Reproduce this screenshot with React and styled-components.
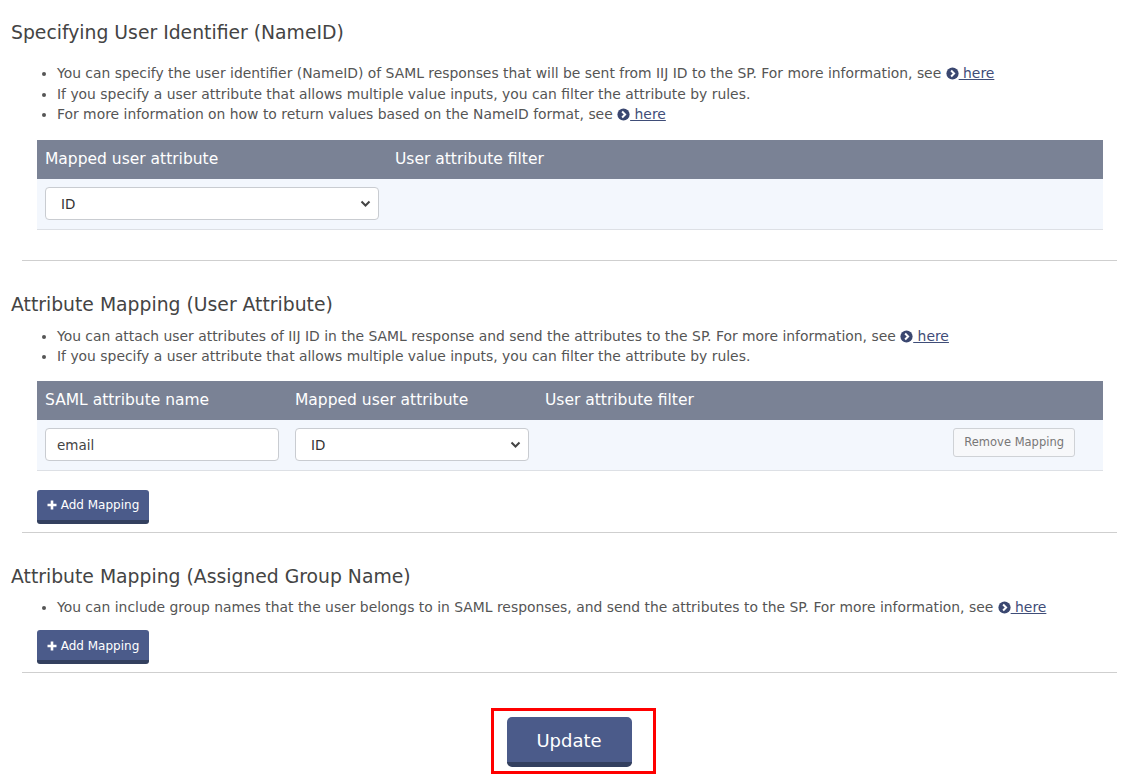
import React from "react";
import styled, { createGlobalStyle } from "styled-components";

const Global = createGlobalStyle`
  html, body { margin: 0; padding: 0; background: #fff; }
  body { font-family: "DejaVu Sans", Verdana, sans-serif; color: #555; }
  * { box-sizing: border-box; }
`;

const Page = styled.div`
  width: 1145px;
  padding: 19px 28px 0 11px;
`;

const Section = styled.section`
  padding-top: ${(p) => p.$pt || 0}px;
  padding-bottom: ${(p) => p.$pb || 0}px;
`;

const Title = styled.h2`
  margin: 0 0 ${(p) => p.$mb}px;
  font-size: 18.8px;
  font-weight: normal;
  color: #444;
  line-height: 28px;
`;

const List = styled.ul`
  margin: 0 0 ${(p) => p.$mb}px;
  padding-left: 46px;
  font-size: 13.9px;
  line-height: 20.5px;
  color: #555;
  li::marker { color: #555; }
`;

const Link = styled.a`
  color: #3f4d78;
  text-decoration: none;
  cursor: pointer;
  span { text-decoration: underline; }
  svg { vertical-align: -2px; }
`;

const Table = styled.div`
  margin: 0 14px 0 26px;
`;

const Row = styled.div`
  display: grid;
  grid-template-columns: ${(p) => p.$cols};
  align-items: center;
  padding: 0 8px;
  gap: 16px;
`;

const Head = styled(Row)`
  background: #7a8295;
  height: 39px;
  color: #fff;
  font-size: 15.5px;
`;

const Body = styled(Row)`
  background: #f3f7fd;
  height: 51px;
  border-bottom: 1px solid #dde0e5;
`;

const InputBox = styled.input`
  height: 33px;
  width: 100%;
  border: 1px solid #c9ccd1;
  border-radius: 4px;
  background: #fff;
  padding: 0 11px;
  font: inherit;
  font-size: 13.5px;
  color: #444;
  outline: none;
`;

const SelectWrap = styled.div`
  position: relative;
  width: 100%;
  svg { position: absolute; right: 8px; top: 13px; pointer-events: none; }
`;

const Select = styled.select`
  appearance: none;
  height: 33px;
  width: 100%;
  border: 1px solid #c9ccd1;
  border-radius: 4px;
  background: #fff;
  padding: 0 15px;
  font: inherit;
  font-size: 13.5px;
  color: #333;
  outline: none;
`;

const RemoveBtn = styled.button`
  justify-self: end;
  align-self: start;
  margin-top: 8px;
  margin-right: 20px;
  height: 29px;
  padding: 0 10px;
  border: 1px solid #cfd2d6;
  border-radius: 3px;
  background: #f7f8fa;
  color: #777;
  font: inherit;
  font-size: 11.5px;
`;

const PrimaryBtn = styled.button`
  display: inline-flex;
  align-items: center;
  justify-content: center;
  gap: 4px;
  border: none;
  background: #4b5b8a;
  border-bottom: ${(p) => (p.$big ? 5 : 4)}px solid #33405f;
  border-radius: ${(p) => (p.$big ? 5 : 3)}px;
  color: #fff;
  font-family: inherit;
  font-size: ${(p) => (p.$big ? 18 : 12)}px;
  height: ${(p) => (p.$big ? 50 : 34)}px;
  width: ${(p) => (p.$big ? 125 : 112)}px;
  padding: 1px 0 0;
`;

const BtnRow = styled.div`
  margin: ${(p) => p.$m};
`;

const Divider = styled.hr`
  margin: 0 0 0 11px;
  border: none;
  border-top: 1px solid #cfcfcf;
`;

const Footer = styled.div`
  display: flex;
  justify-content: center;
  padding-top: 35px;
  padding-left: 18px;
`;

const Highlight = styled.div`
  border: 3px solid #f00;
  padding: 6px 21px 4px 13px;
  display: flex;
`;

const CircleChevron = () => (
  <svg width="13" height="13" viewBox="0 0 16 16">
    <circle cx="8" cy="8" r="7.5" fill="#3a4770" />
    <path d="M6.3 4.3 L10 8 L6.3 11.7" stroke="#fff" strokeWidth="2.4" fill="none" />
  </svg>
);

const Here = () => (
  <Link>
    <CircleChevron />
    <span> here</span>
  </Link>
);

const Chevron = () => (
  <svg width="11" height="8" viewBox="0 0 11 8">
    <path d="M1.5 1.5 L5.5 5.5 L9.5 1.5" stroke="#444" strokeWidth="2" fill="none" />
  </svg>
);

const SelectBox = () => (
  <SelectWrap>
    <Select defaultValue="ID">
      <option>ID</option>
    </Select>
    <Chevron />
  </SelectWrap>
);

const Plus = () => (
  <svg width="10" height="10" viewBox="0 0 10 10">
    <path d="M5 0.5 V9.5 M0.5 5 H9.5" stroke="#fff" strokeWidth="2.6" />
  </svg>
);

export default function App() {
  return (
    <Page>
      <Global />
      <Section $pb={30}>
        <Title $mb={16}>Specifying User Identifier (NameID)</Title>
        <List $mb={15}>
          <li>
            You can specify the user identifier (NameID) of SAML responses that will be sent from IIJ ID to the SP. For more information, see <Here />
          </li>
          <li>If you specify a user attribute that allows multiple value inputs, you can filter the attribute by rules.</li>
          <li>
            For more information on how to return values based on the NameID format, see <Here />
          </li>
        </List>
        <Table>
          <Head $cols="334px 1fr">
            <div>Mapped user attribute</div>
            <div>User attribute filter</div>
          </Head>
          <Body $cols="334px 1fr">
            <SelectBox />
            <div />
          </Body>
        </Table>
      </Section>
      <Divider />
      <Section $pt={30}>
        <Title $mb={7}>Attribute Mapping (User Attribute)</Title>
        <List $mb={14}>
          <li>
            You can attach user attributes of IIJ ID in the SAML response and send the attributes to the SP. For more information, see <Here />
          </li>
          <li>If you specify a user attribute that allows multiple value inputs, you can filter the attribute by rules.</li>
        </List>
        <Table>
          <Head $cols="234px 234px 1fr">
            <div>SAML attribute name</div>
            <div>Mapped user attribute</div>
            <div>User attribute filter</div>
          </Head>
          <Body $cols="234px 234px 1fr auto">
            <InputBox defaultValue="email" />
            <SelectBox />
            <div />
            <RemoveBtn>Remove Mapping</RemoveBtn>
          </Body>
        </Table>
        <BtnRow $m="19px 0 8px 26px">
          <PrimaryBtn>
            <Plus /> Add Mapping
          </PrimaryBtn>
        </BtnRow>
      </Section>
      <Divider />
      <Section $pt={30}>
        <Title $mb={6}>Attribute Mapping (Assigned Group Name)</Title>
        <List $mb={13}>
          <li>
            You can include group names that the user belongs to in SAML responses, and send the attributes to the SP. For more information, see <Here />
          </li>
        </List>
        <BtnRow $m="0 0 8px 26px">
          <PrimaryBtn>
            <Plus /> Add Mapping
          </PrimaryBtn>
        </BtnRow>
      </Section>
      <Divider />
      <Footer>
        <Highlight>
          <PrimaryBtn $big>Update</PrimaryBtn>
        </Highlight>
      </Footer>
    </Page>
  );
}
